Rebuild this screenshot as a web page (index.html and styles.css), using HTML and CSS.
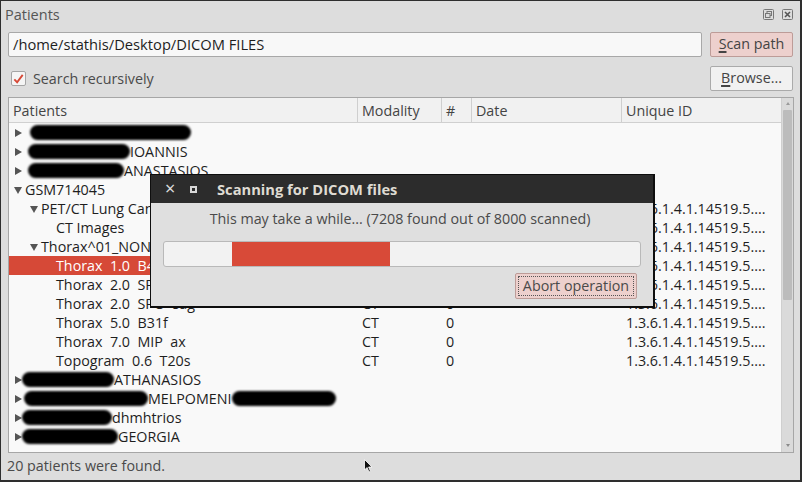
FILE: index.html
```html
<!DOCTYPE html>
<html>
<head>
<meta charset="utf-8">
<link rel="stylesheet" href="styles.css">
</head>
<body>
<div class="window">
  <div class="dock-title">
    <span class="dock-name">Patients</span>
    <span class="dock-icons">
      <svg width="11" height="11" viewBox="0 0 11 11"><rect x="0.5" y="0.5" width="10" height="10" rx="1" fill="none" stroke="#777"/><rect x="4" y="2.5" width="4.5" height="4" fill="none" stroke="#777"/><rect x="2.5" y="4.5" width="4.5" height="4" fill="#dcdcdc" stroke="#777"/></svg>
      <svg width="11" height="11" viewBox="0 0 11 11"><rect x="0.5" y="0.5" width="10" height="10" rx="1" fill="none" stroke="#777"/><path d="M3 3 L8 8 M8 3 L3 8" stroke="#555" stroke-width="1.6"/></svg>
    </span>
  </div>
  <div class="path-row">
    <div class="path-input">/home/stathis/Desktop/DICOM FILES</div>
    <div class="btn btn-accent"><u>S</u>can path</div>
  </div>
  <div class="opt-row">
    <label class="check">
      <span class="box"><svg width="14" height="14" viewBox="0 0 14 14"><path d="M2.5 7.5 L5.5 10.5 L11.5 2.5" fill="none" stroke="#d64937" stroke-width="2"/></svg></span>
      <span class="check-label">Search recursively</span>
    </label>
    <div class="btn"><u>B</u>rowse...</div>
  </div>
  <div class="tree">
    <div class="tree-main">
      <div class="row header">
        <div class="cell">Patients</div>
        <div class="cell sep">Modality</div>
        <div class="cell sep">#</div>
        <div class="cell sep">Date</div>
        <div class="cell sep">Unique ID</div>
      </div>
      <div class="body">
        <div class="row"><div class="cell c1 l0"><span class="arr r"></span><span class="blob" style="width:161px"></span></div><div class="cell"></div><div class="cell"></div><div class="cell"></div><div class="cell"></div></div>
        <div class="row"><div class="cell c1 l0"><span class="arr r"></span><span class="blob" style="width:102px;margin-left:-2px"></span>IOANNIS</div><div class="cell"></div><div class="cell"></div><div class="cell"></div><div class="cell"></div></div>
        <div class="row"><div class="cell c1 l0"><span class="arr r"></span><span class="blob" style="width:96px;margin-left:-2px"></span>ANASTASIOS</div><div class="cell"></div><div class="cell"></div><div class="cell"></div><div class="cell"></div></div>
        <div class="row"><div class="cell c1 l0"><span class="arr d"></span>GSM714045</div><div class="cell"></div><div class="cell"></div><div class="cell"></div><div class="cell"></div></div>
        <div class="row"><div class="cell c1 l1"><span class="arr d"></span>PET/CT Lung Cancer</div><div class="cell"></div><div class="cell"></div><div class="cell"></div><div class="cell">1.3.6.1.4.1.14519.5....</div></div>
        <div class="row"><div class="cell c1 l2">CT Images</div><div class="cell"></div><div class="cell"></div><div class="cell"></div><div class="cell">1.3.6.1.4.1.14519.5....</div></div>
        <div class="row"><div class="cell c1 l1"><span class="arr d"></span>Thorax^01_NONE</div><div class="cell"></div><div class="cell"></div><div class="cell"></div><div class="cell">1.3.6.1.4.1.14519.5....</div></div>
        <div class="row"><div class="cell c1 l2 sel">Thorax  1.0  B45f</div><div class="cell"></div><div class="cell"></div><div class="cell"></div><div class="cell">1.3.6.1.4.1.14519.5....</div></div>
        <div class="row"><div class="cell c1 l2">Thorax  2.0  SPO  cor</div><div class="cell"></div><div class="cell"></div><div class="cell"></div><div class="cell">1.3.6.1.4.1.14519.5....</div></div>
        <div class="row"><div class="cell c1 l2">Thorax  2.0  SPO  sag</div><div class="cell">CT</div><div class="cell">0</div><div class="cell"></div><div class="cell">1.3.6.1.4.1.14519.5....</div></div>
        <div class="row"><div class="cell c1 l2">Thorax  5.0  B31f</div><div class="cell">CT</div><div class="cell">0</div><div class="cell"></div><div class="cell">1.3.6.1.4.1.14519.5....</div></div>
        <div class="row"><div class="cell c1 l2">Thorax  7.0  MIP  ax</div><div class="cell">CT</div><div class="cell">0</div><div class="cell"></div><div class="cell">1.3.6.1.4.1.14519.5....</div></div>
        <div class="row"><div class="cell c1 l2">Topogram  0.6  T20s</div><div class="cell">CT</div><div class="cell">0</div><div class="cell"></div><div class="cell">1.3.6.1.4.1.14519.5....</div></div>
        <div class="row"><div class="cell c1 l0"><span class="arr r"></span><span class="blob" style="width:92px;margin-left:-8px"></span>ATHANASIOS</div><div class="cell"></div><div class="cell"></div><div class="cell"></div><div class="cell"></div></div>
        <div class="row"><div class="cell c1 l0"><span class="arr r"></span><span class="blob" style="width:124px;margin-left:-6px"></span>MELPOMENI<span class="blob" style="width:104px"></span></div><div class="cell"></div><div class="cell"></div><div class="cell"></div><div class="cell"></div></div>
        <div class="row"><div class="cell c1 l0"><span class="arr r"></span><span class="blob" style="width:90px;margin-left:-8px"></span>dhmhtrios</div><div class="cell"></div><div class="cell"></div><div class="cell"></div><div class="cell"></div></div>
        <div class="row"><div class="cell c1 l0"><span class="arr r"></span><span class="blob" style="width:96px;margin-left:-8px"></span>GEORGIA</div><div class="cell"></div><div class="cell"></div><div class="cell"></div><div class="cell"></div></div>
      </div>
    </div>
    <div class="scrollbar">
      <div class="sb-arrow up"></div>
      <div class="sb-track"><div class="sb-thumb"></div></div>
      <div class="sb-arrow down"></div>
    </div>
  </div>
  <div class="status">20 patients were found.</div>

  <div class="dialog">
    <div class="dlg-title">
      <span class="dlg-x">×</span>
      <span class="dlg-max"></span>
      <span class="dlg-name">Scanning for DICOM files</span>
    </div>
    <div class="dlg-body">
      <div class="dlg-msg">This may take a while... (7208 found out of 8000 scanned)</div>
      <div class="progress"><div class="chunk"></div></div>
      <div class="dlg-actions"><div class="btn btn-accent focus"><span>Abort operation</span></div></div>
    </div>
  </div>

  <svg class="cursor" width="10" height="14" viewBox="0 0 10 14"><path d="M0.5 0.5 L0.5 11 L3 8.5 L5 13 L6.5 12.3 L4.6 8 L8 8 Z" fill="#111" stroke="#fff" stroke-width="0.8"/></svg>
</div>
</body>
</html>
```
FILE: styles.css
```css
* { box-sizing: border-box; }
html, body { margin: 0; padding: 0; }
body {
  width: 802px; height: 482px; overflow: hidden;
  font-family: "Open Sans", "DejaVu Sans", sans-serif;
  font-size: 14.3px;
  color: #3c3c3c;
}
.window {
  position: relative;
  width: 802px; height: 482px;
  background: #dddddd;
  border: 1px solid #2e2e2e;
  border-right-width: 2px;
  border-bottom-width: 2px;
  display: flex; flex-direction: column;
}
.dock-title {
  height: 31px;
  display: flex; align-items: center; justify-content: space-between;
  padding: 0 7px 0 4px;
}
.dock-name { font-size: 14.5px; color: #555; margin-top: -5px; }
.dock-icons { display: flex; gap: 8px; margin-top: -5px; }
.path-row {
  display: flex; gap: 8px;
  padding: 0 7px 0 7px;
  height: 25px;
}
.path-input {
  flex: 1;
  background: #f8f8f8;
  border: 1px solid #a8a8a8;
  border-radius: 2px;
  padding: 0 4px;
  line-height: 23px;
  font-size: 14.7px;
  color: #1e1e1e;
}
.btn {
  width: 83px;
  height: 25px;
  border: 1px solid #aaaaaa;
  border-radius: 2px;
  background: #f1f1f1;
  text-align: center;
  line-height: 22px;
  color: #444;
}
.btn u { text-decoration-thickness: 1.5px; text-underline-offset: 2px; }
.btn-accent { background: #edd0cd; border-color: #bd9c98; }
.opt-row {
  display: flex; justify-content: space-between; align-items: center;
  padding: 0 7px 0 10px;
  height: 25px;
  margin-top: 9px;
}
.check { display: flex; align-items: center; gap: 7px; }
.box {
  width: 15px; height: 15px;
  border: 1px solid #a5a5a5; border-radius: 2px;
  background: #f5f5f5;
  display: flex; align-items: center; justify-content: center;
}
.check-label { color: #4a4a4a; }
.tree {
  margin: 6px 6px 0 7px;
  height: 356px;
  border: 1px solid #a6a6a6;
  background: #f9f9f9;
  display: flex;
}
.tree-main { flex: 1; display: flex; flex-direction: column; }
.row {
  display: grid;
  grid-template-columns: 348px 84px 30px 150px 160px;
  height: 19px;
  line-height: 19px;
  white-space: pre;
}
.row .cell { padding-left: 5px; overflow: hidden; color: #1e1e1e; }
.header {
  height: 25px; line-height: 25px;
  background: #f1f1f1;
  border-bottom: 1px solid #d0d0d0;
}
.header .cell { color: #444; padding-left: 4px; }
.header .sep { border-left: 1px solid #cfcfcf; }
.body { padding-top: 0; }
.c1 { display: flex; align-items: center; }
.l0 { padding-left: 5px !important; }
.l1 { padding-left: 21px !important; }
.l2 { padding-left: 47px !important; }
.sel { background: #d64937; color: #fff !important; }
.arr { display: inline-block; flex: none; }
.arr.r { border-left: 7px solid #555; border-top: 4px solid transparent; border-bottom: 4px solid transparent; width: 0; height: 0; margin-right: 8px; margin-left: 1px; }
.arr.d { border-top: 7px solid #555; border-left: 4px solid transparent; border-right: 4px solid transparent; width: 0; height: 0; margin-right: 3px; margin-top: 1px; }
.blob {
  display: inline-block; height: 15px; flex: none;
  background: #000; border-radius: 8px;
  filter: blur(1.2px);
}
.scrollbar {
  width: 13px;
  background: #dadada;
  border-left: 1px solid #cfcfcf;
  display: flex; flex-direction: column;
}
.sb-arrow { height: 12px; position: relative; }
.sb-arrow.up::after, .sb-arrow.down::after {
  content: ""; position: absolute; left: 4px; top: 4px;
  border-left: 2px solid transparent; border-right: 2px solid transparent;
}
.sb-arrow.up::after { border-bottom: 3px solid #9a9a9a; }
.sb-arrow.down::after { border-top: 3px solid #8a8a8a; }
.sb-track { flex: 1; padding: 0 1px; }
.sb-thumb { height: 190px; background: #bcbcbc; border-radius: 1px; }
.status {
  flex: 1;
  display: flex; align-items: center;
  padding-left: 6px;
  color: #4a4a4a;
  padding-bottom: 2px;
}
.dialog {
  position: absolute;
  left: 149px; top: 173px;
  width: 505px; height: 134px;
  border: 1px solid #0e0e0e;
  border-right-width: 2px; border-bottom-width: 2px;
  background: #dfdfdf;
  display: flex; flex-direction: column;
}
.dlg-title {
  height: 28px;
  background: #2c2c2c;
  display: flex; align-items: center;
  padding-left: 14px;
  color: #dfdbd2;
}
.dlg-x { font-size: 18px; width: 13px; line-height: 1; color: #e0e0e0; margin-top: -2px; }
.dlg-max { width: 7px; height: 7px; border: 2px solid #d8d8d8; margin-left: 12px; }
.dlg-name { font-weight: bold; font-size: 14.7px; margin-left: 20px; color: #dfdbd2; }
.dlg-body { flex: 1; display: flex; flex-direction: column; padding: 5px 12px 0 12px; }
.dlg-msg { text-align: center; color: #4a4a4a; height: 24px; line-height: 22px; padding-right: 4px; }
.progress {
  margin-top: 9px;
  height: 26px;
  width: 478px;
  background: #f2f2f2;
  border: 1px solid #b9b9b9;
  border-radius: 3px;
  padding-left: 68px;
}
.chunk { width: 158px; height: 24px; background: #d84a38; }
.dlg-actions { display: flex; justify-content: flex-end; margin-top: 6px; padding-right: 4px; }
.dlg-actions .btn { width: 122px; height: 26px; padding: 2px; }
.dlg-actions .btn span { display: block; border: 1px dotted #555; line-height: 18px; color: #4a4a4a; }
.cursor { position: absolute; left: 363px; top: 458px; }
```
